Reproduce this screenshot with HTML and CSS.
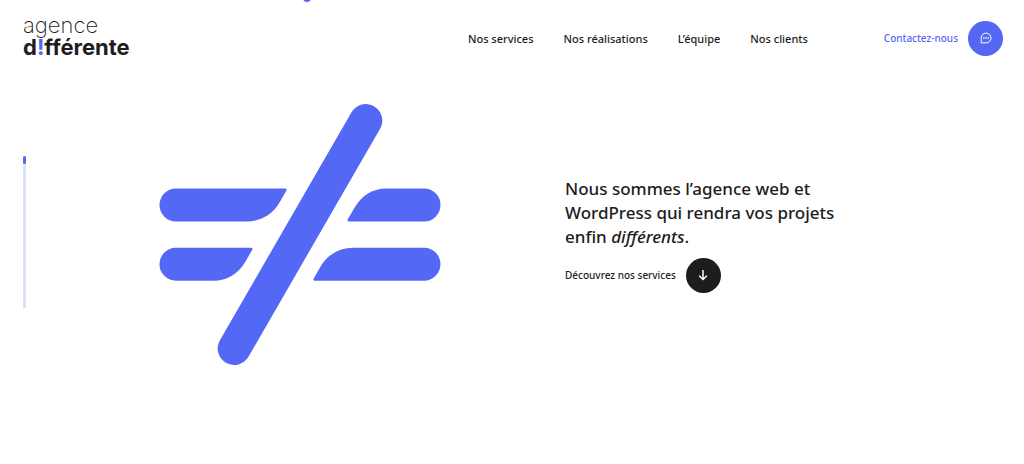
FILE: index.html
```html
<!DOCTYPE html>
<html lang="fr">
<head>
    <meta charset="UTF-8">
    <meta name="viewport" content="width=device-width, initial-scale=1.0">
    <title>Agence différente</title>
    <link rel="stylesheet" href="styles.css">
</head>
<body>
    <span class="cursor-dot"></span>

    <header class="header">
        <a href="#" class="logo">
            <span class="logo-top">agence</span>
            <span class="logo-bottom">d<span class="logo-mark">!</span>fférente</span>
        </a>
        <nav class="nav">
            <a href="#services">Nos services</a>
            <a href="#realisations">Nos réalisations</a>
            <a href="#equipe">L’équipe</a>
            <a href="#clients">Nos clients</a>
        </nav>
        <a href="#contact" class="round-link contact">
            Contactez-nous
            <span class="round-icon">
                <svg width="12" height="12" viewBox="0 0 12 12" fill="none" stroke="currentColor">
                    <path d="M1.2 10.9V6A4.9 4.9 0 1 1 6.1 10.9Z" stroke-linejoin="round"/>
                    <path d="M3.2 6h1.3M5.4 6h1.3M7.6 6h1.3" stroke-width="1.4"/>
                </svg>
            </span>
        </a>
    </header>

    <main class="hero">
        <div class="progress"><div class="progress-bar"></div></div>

        <div class="hero-figure">
            <svg class="symbol" viewBox="159 104 282 261" fill="currentColor">
                <defs>
                    <path id="barLong" d="M176 188.5H285Q287.4 188.5 286.3 190.7L279.4 202.8C272.5 215 260 221.5 246.5 221.5H176A16.5 16.5 0 0 1 176 188.5Z"/>
                    <path id="barShort" d="M176 247.7H251Q253.2 247.7 252.2 249.9L245.2 262C238 274 227 280.7 213.5 280.7H176A16.5 16.5 0 0 1 176 247.7Z"/>
                </defs>
                <use href="#barLong"/>
                <use href="#barShort"/>
                <use href="#barLong" transform="rotate(180 300 234.6)"/>
                <use href="#barShort" transform="rotate(180 300 234.6)"/>
                <path d="M365.8 120.5L234.2 348.5" stroke="currentColor" stroke-width="33" stroke-linecap="round"/>
            </svg>
        </div>

        <div class="hero-content">
            <h1>Nous sommes l’agence web et WordPress qui rendra vos projets enfin <em>différents</em>.</h1>
            <a href="#services" class="round-link">
                Découvrez nos services
                <span class="round-icon">
                    <svg width="12" height="12" viewBox="0 0 12 12" fill="none" stroke="currentColor" stroke-width="1.5">
                        <path d="M6 1v9.4M2.2 6.8L6 10.5l3.8-3.7"/>
                    </svg>
                </span>
            </a>
        </div>
    </main>
</body>
</html>
```
FILE: styles.css
```css
:root {
    --blue: #5369f5;
    --blue-light: #dce0fd;
    --dark: #1d1d1d;
}

* {
    box-sizing: border-box;
}

body {
    margin: 0;
    background: #fff;
    color: var(--dark);
    font-family: 'Noto Sans', 'Open Sans', sans-serif;
    font-size: 11px;
    font-weight: 500;
}

a {
    color: inherit;
    text-decoration: none;
}

.cursor-dot {
    position: absolute;
    top: -6px;
    left: 30%;
    margin-left: -4px;
    width: 8px;
    height: 8px;
    border-radius: 50%;
    background: var(--blue);
}

/* Header */
.header {
    display: flex;
    align-items: center;
    height: 76px;
    padding: 0 21px 0 23px;
}

.logo {
    display: flex;
    flex-direction: column;
    padding-bottom: 4px;
    font-family: Inter, sans-serif;
    font-size: 22px;
    line-height: 22px;
}

.logo-top {
    font-weight: 200;
}

.logo-bottom {
    font-weight: 700;
}

.logo-mark {
    color: var(--blue);
}

.nav {
    display: flex;
    gap: 30px;
    margin-left: auto;
}

.round-link {
    display: inline-flex;
    align-items: center;
    gap: 10px;
    font-size: 10px;
}

.contact {
    margin-left: 76px;
    color: var(--blue);
}

.round-icon {
    display: flex;
    align-items: center;
    justify-content: center;
    width: 35px;
    height: 35px;
    border-radius: 50%;
    background: var(--dark);
    color: #fff;
}

.contact .round-icon {
    background: var(--blue);
}

/* Hero */
.hero {
    display: grid;
    grid-template-columns: 3px 16fr 13fr;
    align-items: center;
    padding: 28px 21px 28px 23px;
}

.progress {
    height: 152px;
    margin-bottom: 6px;
    border-radius: 2px;
    background: var(--blue-light);
}

.progress-bar {
    height: 8px;
    border-radius: 2px;
    background: var(--blue);
}

.hero-figure {
    display: flex;
    justify-content: center;
    padding-left: 8px;
    color: var(--blue);
}

.symbol {
    display: block;
    width: 282px;
}

.hero-content h1 {
    max-width: 290px;
    margin: 0 0 9px;
    font-size: 17px;
    font-weight: 500;
    line-height: 24px;
}
```
